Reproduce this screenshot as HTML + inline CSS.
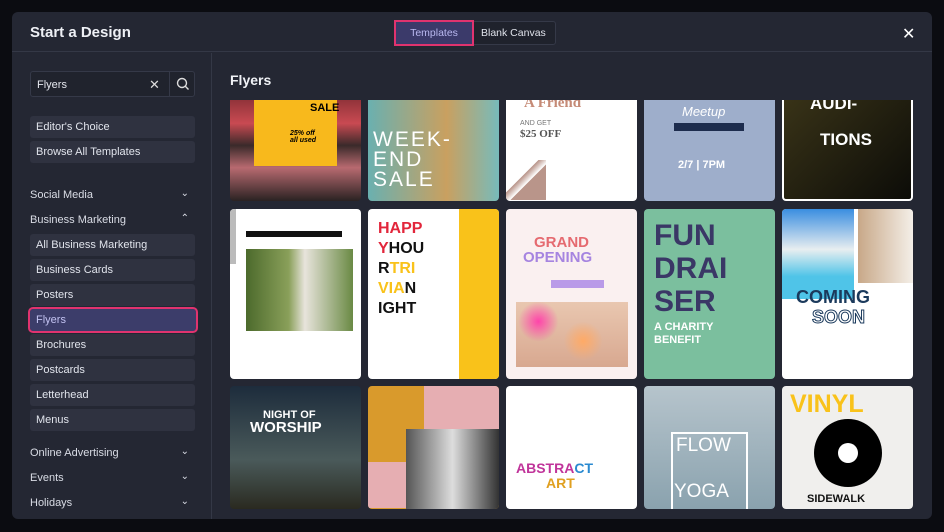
<!DOCTYPE html>
<html><head><meta charset="utf-8"><style>
*{box-sizing:border-box;margin:0;padding:0}
body{width:944px;height:532px;background:#0b0c11;font-family:"Liberation Sans",sans-serif;overflow:hidden;position:relative}
.modal{position:absolute;left:12px;top:12px;width:920px;height:507px;background:#242733;border-radius:6px;overflow:hidden}
.hdr{position:absolute;left:0;top:0;width:920px;height:40px;border-bottom:1px solid #343846}
.title{position:absolute;left:18px;top:12px;color:#eef0f5;font-size:15px;font-weight:bold}
.tabs{position:absolute;left:383px;top:9px;height:24px;display:flex;border:1px solid #353948;border-radius:3px;background:#1f222c}
.tab{font-size:10.5px;color:#dfe2ea;padding:0 9px;line-height:22px}
.tab.on{background:#3b3a6a;color:#b9b8f0;outline:2px solid #e0336f;width:76px;text-align:center}
.close{position:absolute;left:890px;top:12px;color:#fff;font-size:16px}
.side{position:absolute;left:0;top:41px;width:200px;height:466px;border-right:1px solid #343846}
.search{position:absolute;left:18px;top:18px;width:165px;height:26px;border:1px solid #353948;border-radius:3px;background:#20232d}
.search span{position:absolute;left:6px;top:7px;font-size:11px;color:#e6e8ef}
.search .x{left:118px;top:5px;font-size:13px;color:#ddd}
.search .sb{position:absolute;left:138px;top:0;width:26px;height:24px;border-left:1px solid #353948}
.btn{position:absolute;left:18px;width:165px;height:22px;background:#2f3240;border-radius:3px;font-size:11px;color:#e1e4ec;padding-left:6px;line-height:22px}
.cat{position:absolute;left:18px;width:165px;font-size:11px;color:#d9dce5}
.cat i{position:absolute;right:6px;top:-1px;font-style:normal;font-size:10px}
.btn.sel{background:#3c3d6a;color:#c3c3f2;outline:2px solid #e0336f;width:166px}
.flyh{position:absolute;left:218px;top:60px;color:#f0f2f6;font-size:14px;font-weight:bold}
.grid{position:absolute;left:218px;top:88px;width:690px;height:409px;overflow:hidden}
.c{position:absolute;width:131px;border-radius:4px;overflow:hidden}
.t{position:absolute;font-weight:bold;white-space:nowrap}
</style></head><body>
<div class="modal">
 <div class="hdr">
  <div class="title">Start a Design</div>
  <div class="tabs"><div class="tab on">Templates</div><div class="tab">Blank Canvas</div></div>
  <div class="close">✕</div>
 </div>
 <div class="side">
  <div class="search"><span>Flyers</span><span class="x">✕</span><div class="sb"><svg width="26" height="24"><circle cx="12" cy="11" r="4.5" fill="none" stroke="#ddd" stroke-width="1.4"/><line x1="15.3" y1="14.3" x2="18.5" y2="17.5" stroke="#ddd" stroke-width="1.4"/></svg></div></div>
  <div class="btn" style="top:63px">Editor's Choice</div>
  <div class="btn" style="top:88px">Browse All Templates</div>
  <div class="cat" style="top:136px">Social Media<i>⌄</i></div>
  <div class="cat" style="top:161px">Business Marketing<i>⌃</i></div>
  <div class="btn" style="top:181px">All Business Marketing</div>
  <div class="btn" style="top:206px">Business Cards</div>
  <div class="btn" style="top:231px">Posters</div>
  <div class="btn sel" style="top:256px">Flyers</div>
  <div class="btn" style="top:281px">Brochures</div>
  <div class="btn" style="top:306px">Postcards</div>
  <div class="btn" style="top:331px">Letterhead</div>
  <div class="btn" style="top:356px">Menus</div>
  <div class="cat" style="top:394px">Online Advertising<i>⌄</i></div>
  <div class="cat" style="top:419px">Events<i>⌄</i></div>
  <div class="cat" style="top:444px">Holidays<i>⌄</i></div>
 </div>
 <div class="flyh">Flyers</div>
 <div class="grid">
  <!-- row1 -->
  <div class="c" style="left:0;top:-10px;height:111px;background:linear-gradient(#7a2a30,#c94a52 30%,#3a2a2a 50%,#b86a70 70%,#2a2222)"><div style="position:absolute;left:24px;top:10px;width:83px;height:66px;background:#f8b91c"></div><div class="t" style="left:80px;top:12px;font-size:11px">SALE</div><div class="t" style="left:60px;top:40px;font-size:7px;font-style:italic">25% off<br>all used</div></div>
  <div class="c" style="left:138px;top:-10px;height:111px;background:linear-gradient(90deg,#6ab0b0,#c9a060 60%,#7bb)"><div class="t" style="left:5px;top:40px;font-size:21px;color:#fff;line-height:20px;font-weight:normal;letter-spacing:2px">WEEK-<br>END<br>SALE</div></div>
  <div class="c" style="left:276px;top:-10px;height:111px;background:#fff"><div class="t" style="left:18px;top:5px;font-size:15px;color:#c58a76;font-family:'Liberation Serif',serif">A Friend</div><div class="t" style="left:14px;top:30px;font-size:7px;color:#777;font-weight:normal">AND GET</div><div class="t" style="left:14px;top:38px;font-size:11px;color:#555;font-family:'Liberation Serif',serif">$25 OFF</div><div style="position:absolute;left:0;top:70px;width:40px;height:40px;background:linear-gradient(135deg,#fff 40%,#b9958a 41%,#fff 55%,#b9958a 56%)"></div></div>
  <div class="c" style="left:414px;top:-10px;height:111px;background:#9eaecb"><div class="t" style="left:38px;top:14px;font-size:13px;color:#fff;font-style:italic;font-weight:normal">Meetup</div><div style="position:absolute;left:30px;top:33px;width:70px;height:8px;background:#1d2c4d"></div><div class="t" style="left:34px;top:69px;font-size:11px;color:#fff">2/7 | 7PM</div></div>
  <div class="c" style="left:552px;top:-10px;height:111px;background:linear-gradient(135deg,#3a3418,#0c0c08);border:2px solid #fff"><div class="t" style="left:26px;top:2px;font-size:17px;color:#fff">AUDI-</div><div class="t" style="left:36px;top:38px;font-size:17px;color:#fff">TIONS</div></div>
  <!-- row2 -->
  <div class="c" style="left:0;top:109px;height:170px;background:#fff"><div style="position:absolute;left:16px;top:40px;width:107px;height:82px;background:linear-gradient(90deg,#4c6a2c,#8aa05a 40%,#e8e4dc 55%,#6a8a44)"></div><div style="position:absolute;left:0;top:0;width:6px;height:55px;background:#bbb"></div><div style="position:absolute;left:16px;top:22px;width:96px;height:6px;background:#111"></div></div>
  <div class="c" style="left:138px;top:109px;height:170px;background:#fff"><div style="position:absolute;left:91px;top:0;width:40px;height:170px;background:#f9c21a"></div><div class="t" style="left:10px;top:10px;font-size:16px;line-height:20px;color:#111"><span style="color:#e2263b">HAPP</span><br><span style="color:#e2263b">Y</span>HOU<br>R<span style="color:#f9c21a">TRI</span><br><span style="color:#f9c21a">VIA</span>N<br>IGHT</div></div>
  <div class="c" style="left:276px;top:109px;height:170px;background:#faf0f0"><div class="t" style="left:28px;top:25px;font-size:15px;color:#e56a70">GRAND</div><div class="t" style="left:17px;top:40px;font-size:15px;color:#a684e0">OPENING</div><div style="position:absolute;left:45px;top:71px;width:53px;height:8px;background:#b99ae8"></div><div style="position:absolute;left:10px;top:93px;width:112px;height:65px;background:radial-gradient(circle at 20% 30%,#f4a,transparent 20%),radial-gradient(circle at 60% 60%,#fa6,transparent 25%),linear-gradient(#e9c7b0,#d8a890)"></div></div>
  <div class="c" style="left:414px;top:109px;height:170px;background:#7bbf9e"><div class="t" style="left:10px;top:10px;font-size:30px;line-height:33px;color:#3a3766">FUN<br>DRAI<br>SER</div><div class="t" style="left:10px;top:112px;font-size:11px;line-height:13px;color:#fff">A CHARITY<br>BENEFIT</div></div>
  <div class="c" style="left:552px;top:109px;height:170px;background:#fff"><div style="position:absolute;left:0;top:0;width:72px;height:90px;background:linear-gradient(#3a8ee0,#e8eef0 45%,#4fc4e8 75%)"></div><div style="position:absolute;left:76px;top:0;width:55px;height:74px;background:linear-gradient(90deg,#c8a888,#f4efe8)"></div><div class="t" style="left:14px;top:78px;font-size:18px;color:#1b3a5c">COMING</div><div class="t" style="left:30px;top:98px;font-size:18px;color:#fff;-webkit-text-stroke:1px #1b3a5c">SOON</div></div>
  <!-- row3 -->
  <div class="c" style="left:0;top:286px;height:123px;background:linear-gradient(#1d2c3c,#4a5a5a 60%,#2a2a20)"><div class="t" style="left:33px;top:23px;font-size:11px;color:#fff">NIGHT OF</div><div class="t" style="left:20px;top:33px;font-size:15px;color:#fff">WORSHIP</div></div>
  <div class="c" style="left:138px;top:286px;height:123px;background:#d99a2c"><div style="position:absolute;left:56px;top:0;width:75px;height:43px;background:#e6aeb2"></div><div style="position:absolute;left:0;top:76px;width:38px;height:46px;background:#e6aeb2"></div><div style="position:absolute;left:38px;top:43px;width:93px;height:80px;background:linear-gradient(90deg,#555,#ddd 50%,#333)"></div></div>
  <div class="c" style="left:276px;top:286px;height:123px;background:#fff"><div class="t" style="left:10px;top:74px;font-size:14px;color:#c0349a">ABSTRA<span style="color:#2a8ad0">CT</span></div><div class="t" style="left:40px;top:89px;font-size:14px;color:#e0a020">ART</div></div>
  <div class="c" style="left:414px;top:286px;height:123px;background:linear-gradient(#b6c4cc,#8aa2ae)"><div style="position:absolute;left:27px;top:46px;width:77px;height:80px;border:2px solid #fff"></div><div class="t" style="left:32px;top:49px;font-size:19px;color:#fff;font-weight:normal">FLOW</div><div class="t" style="left:30px;top:95px;font-size:19px;color:#fff;font-weight:normal">YOGA</div></div>
  <div class="c" style="left:552px;top:286px;height:123px;background:#f0efed"><div class="t" style="left:8px;top:4px;font-size:25px;color:#f9c21a">VINYL</div><div style="position:absolute;left:32px;top:33px;width:68px;height:68px;border-radius:50%;background:#000"><div style="position:absolute;left:24px;top:24px;width:20px;height:20px;border-radius:50%;background:#fff"></div></div><div class="t" style="left:25px;top:107px;font-size:11px;color:#111">SIDEWALK</div></div>
 </div>
</div>
</body></html>
